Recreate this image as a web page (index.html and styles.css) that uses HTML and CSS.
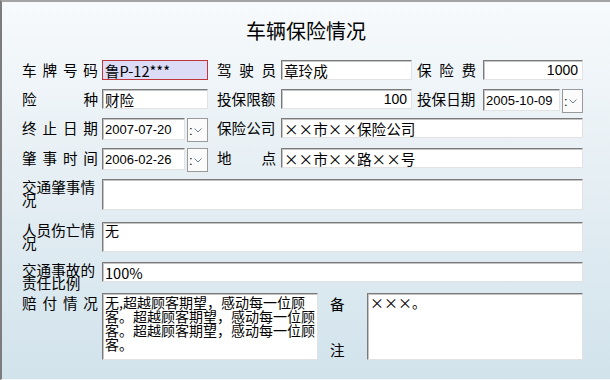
FILE: index.html
```html
<!DOCTYPE html>
<html lang="zh-CN">
<head>
    <meta charset="UTF-8">
    <title>车辆保险情况</title>
    <link rel="stylesheet" href="styles.css">
</head>
<body>
    <div class="window">
        <h1 class="title">车辆保险情况</h1>

        <div class="form">
            <!-- 第一行 -->
            <label class="lbl wide"><span>车</span><span>牌</span><span>号</span><span>码</span></label>
            <input class="field plate" type="text" value="鲁P-12***">
            <label class="lbl mid"><span>驾</span><span>驶</span><span>员</span></label>
            <input class="field" type="text" value="章玲成">
            <label class="lbl right"><span>保</span><span>险</span><span>费</span></label>
            <input class="field num" type="text" value="1000">

            <!-- 第二行 -->
            <label class="lbl wide"><span>险</span><span>种</span></label>
            <input class="field" type="text" value="财险">
            <label class="lbl mid"><span>投保限额</span></label>
            <input class="field num" type="text" value="100">
            <label class="lbl right"><span>投保日期</span></label>
            <div class="date-field">
                <input class="field date" type="text" value="2005-10-09">
                <span class="spin">:<svg width="8" height="5" viewBox="0 0 8 5"><path d="M0.5 0.5 L4 4 L7.5 0.5" fill="none" stroke="#6b7f9a" stroke-width="1"/></svg></span>
            </div>

            <!-- 第三行 -->
            <label class="lbl wide"><span>终</span><span>止</span><span>日</span><span>期</span></label>
            <div class="date-field">
                <input class="field date" type="text" value="2007-07-20">
                <span class="spin">:<svg width="8" height="5" viewBox="0 0 8 5"><path d="M0.5 0.5 L4 4 L7.5 0.5" fill="none" stroke="#6b7f9a" stroke-width="1"/></svg></span>
            </div>
            <label class="lbl mid"><span>保险公司</span></label>
            <input class="field span3" type="text" value="××市××保险公司">

            <!-- 第四行 -->
            <label class="lbl wide"><span>肇</span><span>事</span><span>时</span><span>间</span></label>
            <div class="date-field">
                <input class="field date" type="text" value="2006-02-26">
                <span class="spin">:<svg width="8" height="5" viewBox="0 0 8 5"><path d="M0.5 0.5 L4 4 L7.5 0.5" fill="none" stroke="#6b7f9a" stroke-width="1"/></svg></span>
            </div>
            <label class="lbl mid"><span>地</span><span>点</span></label>
            <input class="field span3" type="text" value="××市××路××号">

            <!-- 多行 -->
            <label class="lbl-multi">交通肇事情况</label>
            <textarea class="field area span5 h31"></textarea>

            <label class="lbl-multi">人员伤亡情况</label>
            <textarea class="field area span5 h30">无</textarea>

            <label class="lbl-multi">交通事故的责任比例</label>
            <input class="field span5" type="text" value="100%">

            <label class="lbl wide"><span>赔</span><span>付</span><span>情</span><span>况</span></label>
            <div class="pay span5">
                <textarea class="field area pay-text">无,超越顾客期望，感动每一位顾客。超越顾客期望，感动每一位顾客。超越顾客期望，感动每一位顾客。</textarea>
                <label class="note"><span>备</span><span>注</span></label>
                <textarea class="field area pay-text">×××。</textarea>
            </div>
        </div>
    </div>
</body>
</html>
```

FILE: styles.css
```css
html, body {
    margin: 0;
    padding: 0;
}

body {
    width: 610px;
    height: 380px;
    overflow: hidden;
    font-family: "Noto Sans CJK SC", "Noto Sans", sans-serif;
    color: #000;
}

.window {
    box-sizing: border-box;
    width: 610px;
    height: 380px;
    border-left: 2px solid #7c7c7c;
    border-top: 2px solid #a4a4a4;
    border-bottom: 1px solid #f2f6f8;
    background: linear-gradient(to bottom, #f7fafc 0%, #e6eff4 45%, #d2e3ec 100%);
}

.title {
    margin: 0;
    height: 58px;
    box-sizing: border-box;
    padding-top: 15px;
    text-align: center;
    font-size: 20px;
    font-weight: normal;
    line-height: 28px;
}

.form {
    display: grid;
    grid-template-columns: 80px 106px 73px 131px 71px 100px;
    grid-template-rows: 29px 29px 30px 31px 43px 40px 31px 67px;
    padding-left: 20px;
    align-items: start;
}

.lbl {
    display: flex;
    justify-content: space-between;
    white-space: nowrap;
    font-size: 14.6px;
    line-height: 19px;
    height: 20px;
}

.lbl.wide {
    width: 76px;
}

.lbl.mid {
    width: 59px;
    margin-left: 9px;
}

.lbl.right {
    width: 59px;
    margin-left: 5px;
}

.lbl-multi {
    width: 76px;
    font-size: 14.6px;
    line-height: 13px;
    padding-top: 1px;
}

.field {
    box-sizing: border-box;
    height: 20px;
    margin: 0;
    padding: 0 2px;
    border: 1px solid;
    border-color: #7a7a7a #e2e2e2 #e2e2e2 #7a7a7a;
    box-shadow: inset 1px 1px 0 #c4c4c4;
    background: #fff;
    font-family: "Noto Sans CJK SC", sans-serif;
    font-size: 14.6px;
    color: #000;
    outline: none;
}

.plate {
    border: 1px solid #c2343c;
    box-shadow: none;
    background: #dcdcf6;
}

.num {
    text-align: right;
    font-family: "Liberation Sans", sans-serif;
    font-size: 14px;
    padding-right: 4px;
}

.span3 {
    grid-column: span 3;
    width: 100%;
}

.span5 {
    grid-column: span 5;
    width: 100%;
}

.date-field {
    display: flex;
    align-items: flex-start;
    gap: 2px;
}

.date {
    flex: 1;
    min-width: 0;
    height: 22px;
    font-family: "Liberation Sans", sans-serif;
    font-size: 13px;
}

.spin {
    box-sizing: border-box;
    width: 21px;
    height: 24px;
    flex-shrink: 0;
    display: flex;
    align-items: center;
    gap: 1px;
    padding-left: 1px;
    border: 1px solid #9a9a9a;
    background: #fbfbfb;
    font-family: "Liberation Sans", sans-serif;
    font-size: 13px;
    line-height: 1;
}

.area {
    resize: none;
    overflow: hidden;
    padding: 0 2px;
    line-height: 14px;
    font-size: 14px;
}

.h31 {
    height: 31px;
}

.h30 {
    height: 30px;
}

.pay {
    display: flex;
    height: 67px;
}

.pay-text {
    width: 216px;
    height: 67px;
    padding-top: 1px;
}

.note {
    width: 49px;
    height: 67px;
    box-sizing: border-box;
    padding: 3px 0 2px 12px;
    display: flex;
    flex-direction: column;
    justify-content: space-between;
    font-size: 14.6px;
    line-height: 16px;
}
```
